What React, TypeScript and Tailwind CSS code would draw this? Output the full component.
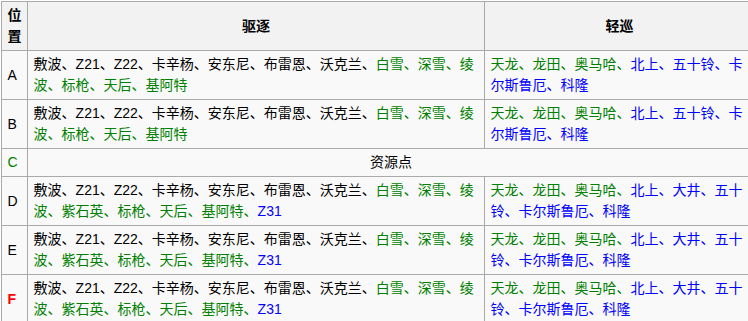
import React from "react";

const G = "text-[#008000]";
const B = "text-[#0000ff]";

const cell = "border border-[#aaaaaa] px-[5.6px] py-[3px] align-middle";

function Destroyers({ extra }: { extra: boolean }) {
  return (
    <>
      <span>敷波、Z21、Z22、卡辛杨、安东尼、布雷恩、沃克兰、</span>
      <span className={G}>
        {extra ? "白雪、深雪、绫波、紫石英、标枪、天后、基阿特、" : "白雪、深雪、绫波、标枪、天后、基阿特"}
      </span>
      {extra && <span className={B}>Z31</span>}
    </>
  );
}

function Cruisers({ extra }: { extra: boolean }) {
  return (
    <>
      <span className={G}>天龙、龙田、奥马哈、</span>
      <span className={B}>{extra ? "北上、大井、五十铃、卡尔斯鲁厄、科隆" : "北上、五十铃、卡尔斯鲁厄、科隆"}</span>
    </>
  );
}

export default function App() {
  const rows: { label: string; extra: boolean; red?: boolean }[] = [
    { label: "A", extra: false },
    { label: "B", extra: false },
  ];
  const rows2: { label: string; extra: boolean; red?: boolean }[] = [
    { label: "D", extra: true },
    { label: "E", extra: true },
    { label: "F", extra: true, red: true },
  ];
  return (
    <div
      className="bg-white text-[14px] leading-[21px] text-black pl-[1px] pt-[1px]"
      style={{ fontFamily: '"Liberation Sans", "Noto Sans CJK SC", sans-serif' }}
    >
      <table className="border-collapse table-fixed w-[753px] bg-[#f9f9f9]">
        <colgroup>
          <col className="w-[26px]" />
          <col className="w-[457px]" />
          <col className="w-[270px]" />
        </colgroup>
        <thead>
          <tr className="bg-[#f2f2f2]">
            <th className={`${cell} text-center font-bold px-[5px]`}>位置</th>
            <th className={`${cell} text-center font-bold`}>驱逐</th>
            <th className={`${cell} text-center font-bold`}>轻巡</th>
          </tr>
        </thead>
        <tbody>
          {rows.map((r) => (
            <tr key={r.label}>
              <td className={cell}>{r.label}</td>
              <td className={cell}>
                <Destroyers extra={r.extra} />
              </td>
              <td className={cell}>
                <Cruisers extra={r.extra} />
              </td>
            </tr>
          ))}
          <tr>
            <td className={`${cell} ${G}`}>C</td>
            <td className={`${cell} text-center`} colSpan={2}>
              资源点
            </td>
          </tr>
          {rows2.map((r) => (
            <tr key={r.label}>
              <td className={`${cell} ${r.red ? "text-[#ff0000] font-bold" : ""}`}>{r.label}</td>
              <td className={cell}>
                <Destroyers extra={r.extra} />
              </td>
              <td className={cell}>
                <Cruisers extra={r.extra} />
              </td>
            </tr>
          ))}
        </tbody>
      </table>
    </div>
  );
}
